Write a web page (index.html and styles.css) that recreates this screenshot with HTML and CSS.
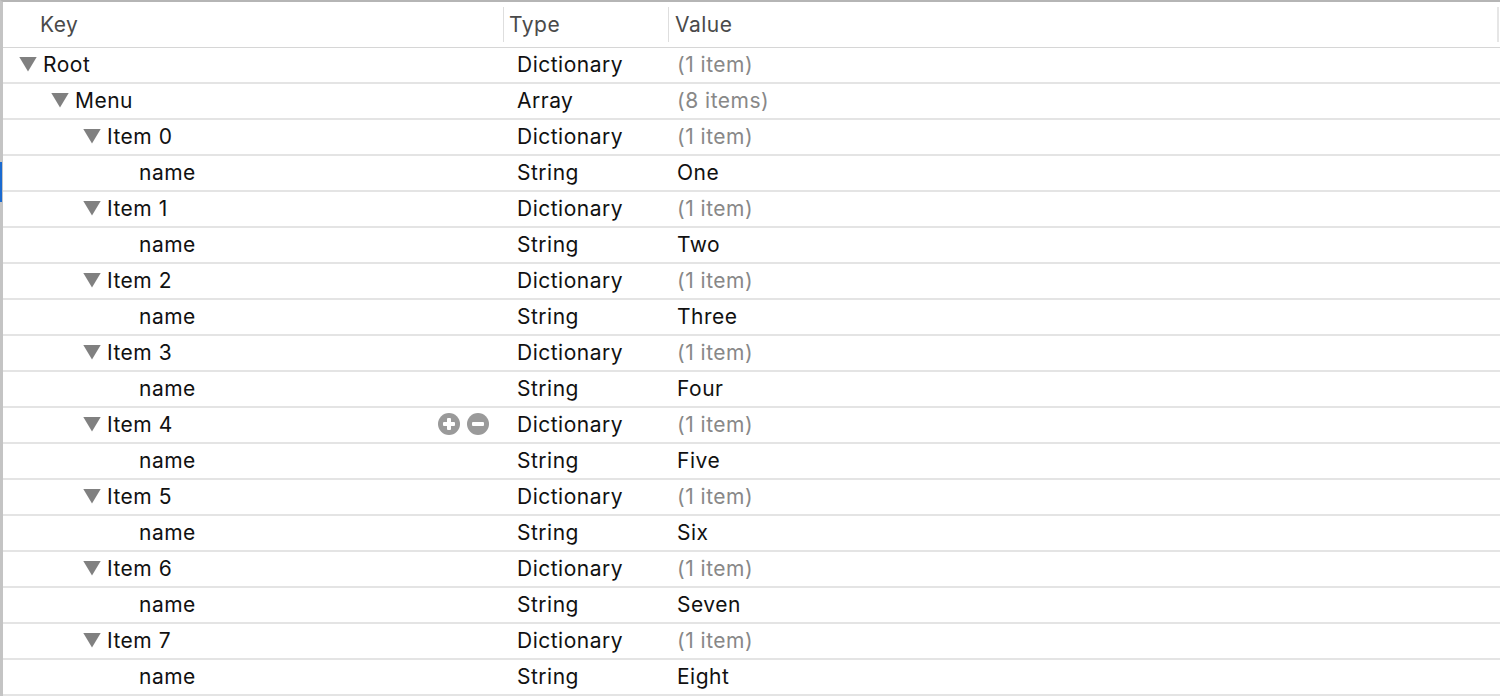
FILE: index.html
```html
<!DOCTYPE html>
<html>
<head>
<meta charset="utf-8">
<link rel="stylesheet" href="styles.css">
</head>
<body>
<div class="editor">
  <div class="marker"></div>
  <div class="header">
    <div class="hcell hkey">Key</div>
    <div class="hcell htype">Type</div>
    <div class="hcell hvalue">Value</div>
  </div>
  <div class="rows">
    <div class="row"><div class="key l0"><span class="tri"></span>Root</div><div class="type">Dictionary</div><div class="value muted">(1 item)</div></div>
    <div class="row"><div class="key l1"><span class="tri"></span>Menu</div><div class="type">Array</div><div class="value muted">(8 items)</div></div>
    <div class="row"><div class="key l2"><span class="tri"></span>Item 0</div><div class="type">Dictionary</div><div class="value muted">(1 item)</div></div>
    <div class="row"><div class="key l2"><span class="leaf"></span>name</div><div class="type">String</div><div class="value">One</div></div>
    <div class="row"><div class="key l2"><span class="tri"></span>Item 1</div><div class="type">Dictionary</div><div class="value muted">(1 item)</div></div>
    <div class="row"><div class="key l2"><span class="leaf"></span>name</div><div class="type">String</div><div class="value">Two</div></div>
    <div class="row"><div class="key l2"><span class="tri"></span>Item 2</div><div class="type">Dictionary</div><div class="value muted">(1 item)</div></div>
    <div class="row"><div class="key l2"><span class="leaf"></span>name</div><div class="type">String</div><div class="value">Three</div></div>
    <div class="row"><div class="key l2"><span class="tri"></span>Item 3</div><div class="type">Dictionary</div><div class="value muted">(1 item)</div></div>
    <div class="row"><div class="key l2"><span class="leaf"></span>name</div><div class="type">String</div><div class="value">Four</div></div>
    <div class="row"><div class="key l2"><span class="tri"></span>Item 4<span class="btns"><svg width="22" height="22" viewBox="0 0 22 22"><circle cx="11" cy="11" r="11" fill="#9a9a9a"/><rect x="5" y="9" width="12" height="4" rx="1" fill="#fff"/><rect x="9" y="5" width="4" height="12" rx="1" fill="#fff"/></svg><svg width="22" height="22" viewBox="0 0 22 22"><circle cx="11" cy="11" r="11" fill="#9a9a9a"/><rect x="5" y="9" width="12" height="4" rx="1" fill="#fff"/></svg></span></div><div class="type">Dictionary</div><div class="value muted">(1 item)</div></div>
    <div class="row"><div class="key l2"><span class="leaf"></span>name</div><div class="type">String</div><div class="value">Five</div></div>
    <div class="row"><div class="key l2"><span class="tri"></span>Item 5</div><div class="type">Dictionary</div><div class="value muted">(1 item)</div></div>
    <div class="row"><div class="key l2"><span class="leaf"></span>name</div><div class="type">String</div><div class="value">Six</div></div>
    <div class="row"><div class="key l2"><span class="tri"></span>Item 6</div><div class="type">Dictionary</div><div class="value muted">(1 item)</div></div>
    <div class="row"><div class="key l2"><span class="leaf"></span>name</div><div class="type">String</div><div class="value">Seven</div></div>
    <div class="row"><div class="key l2"><span class="tri"></span>Item 7</div><div class="type">Dictionary</div><div class="value muted">(1 item)</div></div>
    <div class="row"><div class="key l2"><span class="leaf"></span>name</div><div class="type">String</div><div class="value">Eight</div></div>
  </div>
</div>
</body>
</html>
```
FILE: styles.css
```css
html, body {
  margin: 0;
  padding: 0;
  background: #fff;
}
body {
  width: 1500px;
  height: 696px;
  overflow: hidden;
  font-family: "Inter", "Liberation Sans", sans-serif;
  font-size: 21px;
  letter-spacing: 0.5px;
  color: #111;
}
.editor {
  position: relative;
  height: 696px;
  border-top: 2px solid #b5b5b5;
  border-left: 3px solid #c4c4c4;
  box-sizing: border-box;
}
.marker {
  position: absolute;
  left: -3px;
  top: 160px;
  width: 2px;
  height: 40px;
  background: #1a6ad0;
}
.header {
  display: grid;
  grid-template-columns: 500px 165px 1fr;
  align-items: center;
  height: 45px;
  border-bottom: 1px solid #d6d6d6;
}
.hcell {
  height: 35px;
  display: flex;
  align-items: center;
  color: #4a4a4a;
}
.hkey { padding-left: 37px; }
.htype { border-left: 1px solid #dedede; padding-left: 5px; }
.hvalue { border-left: 1px solid #dedede; padding-left: 6px; border-right: 2px solid #e6e6e6; margin-right: 1px; }
.row {
  display: grid;
  grid-template-columns: 500px 165px 1fr;
  height: 32px;
  padding-bottom: 2px;
  border-bottom: 2px solid #e4e4e4;
  align-items: center;
}
.key {
  display: flex;
  align-items: center;
  padding-right: 14px;
}
.l0 { padding-left: 16px; }
.l1 { padding-left: 48px; }
.l2 { padding-left: 80px; }
.tri, .leaf {
  width: 18px;
  height: 15px;
  margin-right: 6px;
  flex: none;
}
.leaf { width: 50px; }
.tri {
  background: #808080;
  clip-path: polygon(0 0, 100% 0, 50% 100%);
}
.type { padding-left: 14px; }
.value { padding-left: 9px; }
.muted { color: #888; }
.btns {
  margin-left: auto;
  display: flex;
  gap: 7px;
}
.btns svg { display: block; }
```
